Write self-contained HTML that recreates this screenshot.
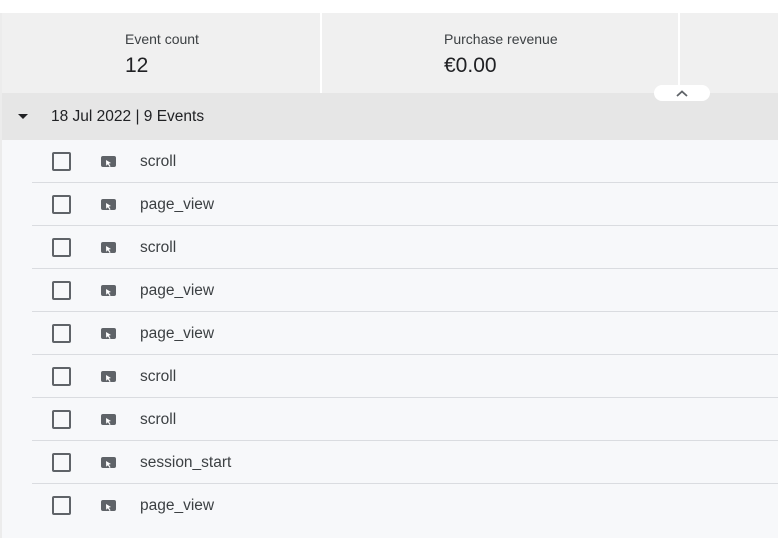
<!DOCTYPE html>
<html><head><style>
*{margin:0;padding:0;box-sizing:border-box}
body{width:778px;height:538px;overflow:hidden;background:#f7f8fa;font-family:"Liberation Sans",Arial,sans-serif;position:relative;color:#202124}
.top{position:absolute;left:0;top:0;width:778px;height:13px;background:#fff}
.lb{position:absolute;left:0;top:13px;width:2px;height:525px;background:#ececec}
.hdr{position:absolute;left:2px;top:13px;width:776px;height:80px;background:#f0f0f0}
.div{position:absolute;top:13px;width:2px;height:80px;background:#fff}
.lab{position:absolute;font-size:14px;color:#3c4043;top:31px}
.val{position:absolute;font-size:21px;color:#202124;top:54px}
.grp{position:absolute;left:2px;top:93px;width:776px;height:47px;background:#e6e6e6}
.grp span{position:absolute;left:49px;top:15px;font-size:15.5px;color:#202124}
.tri{position:absolute;left:16px;top:21px;width:0;height:0;border-left:5px solid transparent;border-right:5px solid transparent;border-top:5px solid #202124}
.pill{position:absolute;left:654px;top:85px;width:56px;height:16px;background:#fff;border-radius:8px}
.row{position:absolute;left:2px;width:776px;height:43px}
.row .cb{position:absolute;left:50px;top:12px;width:19px;height:19px;border:2px solid #5f6368;border-radius:2px}
.row .ic{position:absolute;left:99px;top:16px;width:15px;height:11px;background:#5f6368;border-radius:2px}
.row .t{position:absolute;left:138px;top:13px;font-size:15.5px;color:#3c4043}
.row .ln{position:absolute;left:30px;bottom:0;right:0;height:1px;background:#dadce0}
</style></head><body>
<div class="top"></div>
<div class="hdr"></div>
<div class="lb"></div>
<div class="div" style="left:320px"></div>
<div class="div" style="left:678px"></div>
<div class="lab" style="left:125px">Event count</div>
<div class="val" style="left:125px">12</div>
<div class="lab" style="left:444px">Purchase revenue</div>
<div class="val" style="left:444px">€0.00</div>
<div class="grp"><div class="tri"></div><span>18 Jul 2022 | 9 Events</span></div>
<div class="pill"><svg width="56" height="16" viewBox="0 0 56 16"><path d="M23 11 L28 6.5 L33 11" fill="none" stroke="#5f6368" stroke-width="1.8"/></svg></div>
<div id="rows"></div>
<script>
var n=["scroll","page_view","scroll","page_view","page_view","scroll","scroll","session_start","page_view"],h="";
n.forEach(function(s,i){h+='<div class="row" style="top:'+(140+i*43)+'px"><div class="cb"></div><div class="ic"><svg width="15" height="11" viewBox="0 0 15 11"><path d="M5 2 L10 5 L7.8 5.6 L9.6 8.3 L8.6 9 L6.9 6.3 L5.2 7.8 Z" fill="#fff"/></svg></div><div class="t">'+s+'</div>'+(i<8?'<div class="ln"></div>':'')+'</div>'});
document.getElementById("rows").innerHTML=h;
</script>
</body></html>
